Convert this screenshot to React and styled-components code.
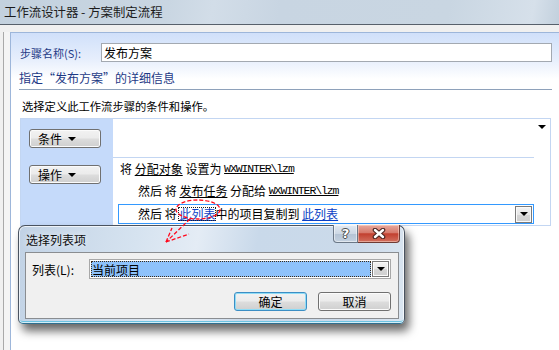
import React from 'react';
import styled, { createGlobalStyle } from 'styled-components';

const GlobalStyle = createGlobalStyle`
  * { box-sizing: border-box; }
  body {
    margin: 0;
    font-family: "Noto Sans CJK SC", "Liberation Sans", sans-serif;
    font-size: 12px;
    color: #000;
  }
`;

// main window
const Window = styled.div`
  position: relative;
  width: 559px;
  height: 350px;
  overflow: hidden;
  display: flex;
  flex-direction: column;
  background: #fff;
`;

const TitleBar = styled.div`
  flex: none;
  height: 25px;
  display: flex;
  align-items: center;
  padding-left: 4px;
  background: linear-gradient(100deg, #c3d1de 0%, #c9d6e2 30%, #d2dde8 38%, #c8d5e2 50%, #c9d6e2 80%, #d6e0ea 95%, #c2d0dd 100%);
  border-bottom: 1px solid #57606b;
  font-size: 12.4px;
  color: #1b1b1b;
  line-height: 1;
`;

const Frame = styled.div`
  flex: 1;
  display: flex;
  flex-direction: column;
  background: #f0f0f0;
  padding-top: 7px;
`;

const FrameInner = styled.div`
  flex: 1;
  display: flex;
  margin-left: 3px;
  border-left: 1px solid #a9a9a9;
  padding-left: 6px;
  background: #f4f4f4;
`;

const Panel = styled.div`
  flex: 1;
  display: flex;
  flex-direction: column;
  border-left: 1px solid #9db6da;
  border-top: 1px solid #9db6da;
  background: linear-gradient(to bottom, #d0e0fa 0px, #e6eefc 26px, #ffffff 46px);
  padding: 10px 7px 0 8px;
`;

const NameRow = styled.div`
  display: flex;
  align-items: center;
  height: 19px;
`;

const NameLabel = styled.label`
  width: 82px;
  padding-left: 1px;
  font-size: 11px;
  color: #1e3a86;
`;

const NameInput = styled.div`
  flex: 1;
  height: 19px;
  display: flex;
  align-items: center;
  padding-left: 2px;
  background: #fff;
  border: 1px solid #a3a9b1;
  font-size: 12px;
`;

const Header = styled.div`
  margin-top: 8px;
  line-height: 16px;
  padding-bottom: 3px;
  border-bottom: 1px solid #8ea1ba;
  font-size: 12px;
  color: #1e3a86;
`;

const Desc = styled.div`
  margin-top: 8px;
  line-height: 16px;
  padding-left: 3px;
  font-size: 11.3px;
`;

const RuleBox = styled.div`
  margin: 4px 1px 0 1px;
  height: 108px;
  display: flex;
  border: 1px solid #c3d6f2;
  flex: none;
`;

const SideCol = styled.div`
  width: 92px;
  background: #c5dafa;
  display: flex;
  flex-direction: column;
  gap: 17px;
  padding: 10px 0 0 8px;
`;

const VistaButton = styled.div`
  width: ${p => p.$w || 72}px;
  height: 19px;
  display: flex;
  align-items: center;
  justify-content: ${p => (p.$center ? 'center' : 'flex-start')};
  gap: 6px;
  padding-left: ${p => (p.$center ? 0 : 8)}px;
  border: 1px solid ${p => (p.$focused ? '#3c8ec4' : '#707070')};
  border-radius: 3px;
  background: linear-gradient(to bottom, #f2f2f2 0%, #ebebeb 48%, #dddddd 52%, #cfcfcf 100%);
  box-shadow: ${p => (p.$focused ? 'inset 0 0 0 1px #8fdcf6' : 'inset 0 0 0 1px #fbfbfb')};
  font-size: 12px;
  line-height: 1;
`;

const Caret = styled.span`
  width: 0;
  height: 0;
  border-left: ${p => p.$s || 4}px solid transparent;
  border-right: ${p => p.$s || 4}px solid transparent;
  border-top: ${p => p.$s || 4}px solid #000;
`;

const MainCol = styled.div`
  flex: 1;
  display: flex;
  flex-direction: column;
`;

const CondArea = styled.div`
  height: 39px;
  border-bottom: 1px solid #c3d6f2;
`;

const ScrollStrip = styled.div`
  width: 16px;
  display: flex;
  justify-content: center;
  padding-top: 6px;
`;

const Rows = styled.div`
  display: flex;
  flex-direction: column;
  gap: 2px;
  padding: 1px 0 0 5px;
`;

const Row = styled.div`
  height: 20px;
  display: flex;
  align-items: center;
  white-space: pre;
  padding-left: ${p => (p.$indent ? 19 : 1)}px;
  padding-right: 1px;
  border: 1px solid ${p => (p.$selected ? '#3399ff' : 'transparent')};
  margin-top: ${p => (p.$selected ? 1 : 0)}px;
  font-size: 12px;
  line-height: 1;
`;

const Under = styled.span`
  text-decoration: underline;
`;

const Account = styled.span`
  font-family: "Liberation Mono", monospace;
  font-size: 11.5px;
  letter-spacing: -1.1px;
  text-decoration: underline;
`;

const Link = styled.span`
  color: #0b3fc4;
  text-decoration: underline;
  outline: ${p => (p.$focus ? '1px dotted #222' : 'none')};
  outline-offset: 0;
`;

const DropButton = styled.div`
  margin-left: auto;
  width: ${p => p.$w || 17}px;
  height: ${p => p.$h || 17}px;
  display: flex;
  align-items: center;
  justify-content: center;
  border: 1px solid #7a7a7a;
  background: linear-gradient(to bottom, #f3f3f3 0%, #e6e6e6 50%, #d6d6d6 51%, #cfcfcf 100%);
  box-shadow: inset 0 0 0 1px #fafafa;
`;

// dialog
const Dialog = styled.div`
  position: absolute;
  left: 18px;
  top: 225px;
  width: 387px;
  height: 99px;
  display: flex;
  flex-direction: column;
  padding: 0 5px 4px 6px;
  border: 1px solid #4a5360;
  border-bottom-color: #2f6f90;
  border-radius: 7px 7px 5px 5px;
  background: linear-gradient(100deg, #c1d2e5 0%, #d6e3f0 30%, #e4ecf5 45%, #c9d9ea 60%, #cbdaea 85%, #dbe6f1 100%);
  box-shadow: inset 0 0 0 1px rgba(255, 255, 255, 0.7), inset 0 -2px 0 #6cc3e2, 4px 7px 10px rgba(0, 0, 0, 0.6);
`;

const DialogTitleRow = styled.div`
  height: 26px;
  display: flex;
  justify-content: space-between;
  align-items: flex-start;
`;

const DialogTitle = styled.div`
  align-self: center;
  padding-left: 1px;
  font-size: 12px;
  color: #0d0d0d;
  text-shadow: 0 0 6px rgba(255, 255, 255, 0.9);
`;

const CaptionButtons = styled.div`
  display: flex;
  margin-top: -1px;
  margin-right: -1px;
`;

const HelpButton = styled.div`
  width: 25px;
  height: 18px;
  display: flex;
  align-items: center;
  justify-content: center;
  border: 1px solid #6b7887;
  border-top: none;
  border-radius: 0 0 0 4px;
  background: linear-gradient(to bottom, #e3eaf2 0%, #cdd8e5 50%, #b4c3d4 51%, #c3d1e0 100%);
  box-shadow: inset 0 0 0 1px rgba(255, 255, 255, 0.5);
  font-family: "DejaVu Sans", sans-serif;
  font-weight: bold;
  font-size: 13px;
  color: #fff;
  text-shadow: 0 0 1px #333, 1px 0 0 #555, -1px 0 0 #555, 0 1px 0 #555, 0 -1px 0 #555;
`;

const CloseButton = styled.div`
  width: 42px;
  height: 18px;
  display: flex;
  align-items: center;
  justify-content: center;
  border: 1px solid #6e3b34;
  border-left: none;
  border-top: none;
  border-radius: 0 0 4px 0;
  background: linear-gradient(to bottom, #e7a99d 0%, #d77a6c 45%, #c2402f 52%, #d2705f 100%);
  box-shadow: inset 0 0 0 1px rgba(255, 230, 220, 0.45);
`;

const DialogBody = styled.div`
  flex: 1;
  display: flex;
  flex-direction: column;
  padding: 6px 7px 0 6px;
  background: #f0f0f0;
  border: 1px solid #8a8d91;
`;

const ComboRow = styled.div`
  display: flex;
  align-items: center;
  height: 20px;
`;

const ComboLabel = styled.label`
  width: 57px;
  font-size: 12px;
`;

const Combo = styled.div`
  width: 302px;
  height: 20px;
  display: flex;
  align-items: center;
  gap: 1px;
  padding: 1px;
  background: #fff;
  border: 1px solid #a8a8a8;
`;

const ComboValue = styled.div`
  flex: 1;
  height: 16px;
  display: flex;
  align-items: center;
  padding-left: 1px;
  background: #8ec2fb;
  outline: 1px dotted #3b2a17;
  outline-offset: -1px;
  font-size: 12px;
`;

const ButtonRow = styled.div`
  display: flex;
  justify-content: flex-end;
  gap: 11px;
  margin-top: 13px;
`;

const Annotation = styled.svg`
  position: absolute;
  left: 0;
  top: 0;
  pointer-events: none;
`;

const CloseGlyph = () => (
  <svg width="14" height="11" viewBox="0 0 14 11">
    <path d="M3 2 L11 9 M11 2 L3 9" stroke="#4a2420" strokeWidth="4.6" strokeLinecap="round" />
    <path d="M3 2 L11 9 M11 2 L3 9" stroke="#ffffff" strokeWidth="2.4" strokeLinecap="round" />
  </svg>
);

export default function App() {
  return (
    <>
      <GlobalStyle />
      <Window>
        <TitleBar>工作流设计器 - 方案制定流程</TitleBar>
        <Frame>
          <FrameInner>
            <Panel>
              <NameRow>
                <NameLabel>步骤名称(S):</NameLabel>
                <NameInput>发布方案</NameInput>
              </NameRow>
              <Header>指定“发布方案”的详细信息</Header>
              <Desc>选择定义此工作流步骤的条件和操作。</Desc>
              <RuleBox>
                <SideCol>
                  <VistaButton>条件 <Caret /></VistaButton>
                  <VistaButton>操作 <Caret /></VistaButton>
                </SideCol>
                <MainCol>
                  <CondArea />
                  <Rows>
                    <Row>将 <Under>分配对象</Under> 设置为 <Account>WXWINTER\lzm</Account></Row>
                    <Row $indent>然后 将 <Under>发布任务</Under> 分配给 <Account>WXWINTER\lzm</Account></Row>
                    <Row $indent $selected>
                      然后 将 <Link $focus>此列表</Link>中的项目复制到 <Link>此列表</Link>
                      <DropButton><Caret $s={4} /></DropButton>
                    </Row>
                  </Rows>
                </MainCol>
                <ScrollStrip><Caret $s={4} /></ScrollStrip>
              </RuleBox>
            </Panel>
          </FrameInner>
        </Frame>

        <Dialog>
          <DialogTitleRow>
            <DialogTitle>选择列表项</DialogTitle>
            <CaptionButtons>
              <HelpButton>?</HelpButton>
              <CloseButton><CloseGlyph /></CloseButton>
            </CaptionButtons>
          </DialogTitleRow>
          <DialogBody>
            <ComboRow>
              <ComboLabel>列表(L):</ComboLabel>
              <Combo>
                <ComboValue>当前项目</ComboValue>
                <DropButton $w={17} $h={16}><Caret $s={4} /></DropButton>
              </Combo>
            </ComboRow>
            <ButtonRow>
              <VistaButton $w={73} $center $focused>确定</VistaButton>
              <VistaButton $w={73} $center>取消</VistaButton>
            </ButtonRow>
          </DialogBody>
        </Dialog>

        <Annotation width="559" height="350" viewBox="0 0 559 350">
          <g fill="none" stroke="#ff0a1e" strokeWidth="1.3" strokeDasharray="4 2">
            <ellipse cx="198" cy="209.5" rx="22" ry="9.5" />
            <path d="M190 219 L166 242" />
            <path d="M166 242 L189 234" />
            <path d="M166 242 L172 228" />
          </g>
        </Annotation>
      </Window>
    </>
  );
}
